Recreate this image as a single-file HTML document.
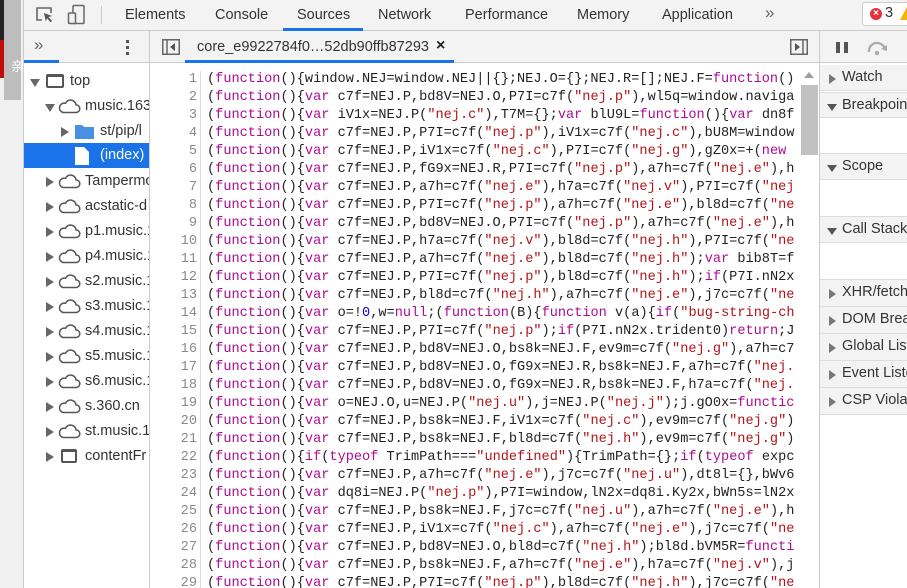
<!DOCTYPE html>
<html><head><meta charset="utf-8"><style>
*{box-sizing:border-box;margin:0;padding:0}
html,body{width:907px;height:588px;overflow:hidden}
body{background:#fff;font-family:"Liberation Sans",sans-serif;position:relative;color:#333}
.abs{position:absolute}
#strip{left:0;top:0;width:24px;height:588px;background:#f0f0f0;border-right:1px solid #ccc}
#top{left:24px;top:0;width:883px;height:31px;background:#f3f3f3;border-bottom:1px solid #ccc}
.tab{position:absolute;top:7px;font-size:14.5px;color:#333}
#side{left:24px;top:31px;width:126px;height:557px;background:#fff;border-right:1px solid #ccc;overflow:hidden}
.row2{background:#f3f3f3;border-bottom:1px solid #ccc;height:32px}
.tr{position:absolute;left:0;width:125px;height:25px;font-size:14.5px;color:#333;white-space:nowrap;overflow:hidden}
.tr span{position:absolute;top:4px}
.arr{position:absolute;top:8px;width:0;height:0;border-left:8px solid #666;border-top:5px solid transparent;border-bottom:5px solid transparent}
.arrd{position:absolute;top:10px;width:0;height:0;border-top:8px solid #666;border-left:5px solid transparent;border-right:5px solid transparent}
#ed{left:150px;top:31px;width:669px;height:557px;background:#fff;overflow:hidden}
#code{position:absolute;left:0;top:40px;width:650px;height:517px;overflow:hidden;font-family:"Liberation Mono",monospace;font-size:13.6px;line-height:18px;white-space:pre}
#nums{position:absolute;left:0;top:0;width:47px;text-align:right;color:#8a8a8a}
#gut{position:absolute;left:50px;top:0;width:1px;height:560px;background:#ddd}
#src{position:absolute;left:57px;top:0;color:#222}
.k{color:#aa0d91}.s{color:#b0151a}.n{color:#1c00cf}
#rp{left:819px;top:31px;width:88px;height:557px;background:#fff;border-left:1px solid #ccc;overflow:hidden}
.sec{position:absolute;left:0;width:88px;background:#f3f3f3;border-bottom:1px solid #ddd;border-top:1px solid #ddd;font-size:14.5px;color:#333;white-space:nowrap;overflow:hidden}
.sec span{position:absolute;left:22px;top:4px}
.sa{position:absolute;left:9px;top:9px;width:0;height:0;border-left:7px solid #777;border-top:5px solid transparent;border-bottom:5px solid transparent}
.sd{position:absolute;left:7px;top:11px;width:0;height:0;border-top:7px solid #555;border-left:5px solid transparent;border-right:5px solid transparent}
</style></head><body>
<div id="strip" class="abs">
 <div class="abs" style="left:0;top:0;width:4px;height:40px;background:#222"></div>
 <div class="abs" style="left:0;top:40px;width:4px;height:38px;background:#c20c0c"></div>
 <div class="abs" style="left:4px;top:0;width:17px;height:100px;background:#bdbdbd"></div>
 <div class="abs" style="left:11px;top:56px;color:#fff;font-size:13px;font-family:'Noto Sans CJK SC',sans-serif">亲</div>
</div>
<div id="top" class="abs">
 <svg class="abs" style="left:10px;top:5px" width="22" height="20" viewBox="0 0 22 20"><path d="M8 15H3V3h14v5" fill="none" stroke="#666" stroke-width="1.6"/><path d="M10 8l8 3-3.5 1 3.5 4-1.5 1.3-3.5-4-1.2 3.2z" fill="#555"/></svg>
 <svg class="abs" style="left:43px;top:4px" width="20" height="22" viewBox="0 0 20 22"><rect x="6" y="1.5" width="11" height="18" rx="1" fill="none" stroke="#666" stroke-width="1.5"/><rect x="1.5" y="9" width="7" height="10.5" rx="1" fill="#f3f3f3" stroke="#666" stroke-width="1.5"/></svg>
 <div class="abs" style="left:77px;top:6px;width:1px;height:18px;background:#ccc"></div>
 <div class="tab" style="left:101px">Elements</div>
 <div class="tab" style="left:191px">Console</div>
 <div class="tab" style="left:273px">Sources</div>
 <div class="abs" style="left:259px;top:28px;width:80px;height:3px;background:#1a73e8"></div>
 <div class="tab" style="left:354px">Network</div>
 <div class="tab" style="left:441px">Performance</div>
 <div class="tab" style="left:553px">Memory</div>
 <div class="tab" style="left:638px">Application</div>
 <div class="tab" style="left:741px;top:3px;font-size:17px;color:#666">»</div>
 <div class="abs" style="left:838px;top:2px;width:60px;height:24px;border:1px solid #ccc;border-radius:3px;background:#fff"></div>
 <div class="abs" style="left:846px;top:8px;width:12px;height:12px;border-radius:6px;background:#e8303a;color:#fff;font-size:10px;line-height:12px;text-align:center;font-weight:bold">×</div>
 <div class="abs" style="left:861px;top:5px;font-size:14.5px;color:#333">3</div>
 <div class="abs" style="left:876px;top:7px;width:0;height:0;border-bottom:13px solid #f4b400;border-left:7px solid transparent;border-right:7px solid transparent"></div>
</div>
<div id="side" class="abs">
 <div class="row2 abs" style="left:0;top:0;width:125px">
  <div class="abs" style="left:10px;top:4px;font-size:17px;color:#666">»</div>
  <div class="abs" style="left:102px;top:9px;width:3px;height:3px;background:#555;box-shadow:0 6px 0 #555,0 12px 0 #555"></div>
  <div class="abs" style="left:0;top:29px;width:35px;height:3px;background:#1a73e8"></div>
 </div>
 <div class="tr" style="top:38px"><div class="arrd" style="left:6px"></div><div class="abs" style="left:22px;top:5px;width:18px;height:14px;border:2px solid #555;border-top-width:3px;border-radius:2px"></div><span style="left:46px">top</span></div>
 <div class="tr" style="top:63px"><div class="arrd" style="left:21px"></div><svg class="abs" style="left:33px;top:5px" width="24" height="15" viewBox="0 0 24 15"><path d="M6 13.5h13a3.8 3.8 0 0 0 0-7.6 5.5 5.5 0 0 0-10.5-1.6A4.6 4.6 0 0 0 6 13.5z" fill="none" stroke="#555" stroke-width="1.5"/></svg><span style="left:61px">music.163</span></div>
 <div class="tr" style="top:88px"><div class="arr" style="left:37px"></div><svg class="abs" style="left:51px;top:4px" width="19" height="16" viewBox="0 0 19 16"><path d="M0 2h7l2 2h10v12H0z" fill="#4a90e2"/></svg><span style="left:76px">st/pip/l</span></div>
 <div class="tr" style="top:112px;background:#1a73e8;color:#fff"><svg class="abs" style="left:51px;top:4px" width="14" height="18" viewBox="0 0 14 18"><path d="M0 0h9l5 5v13H0z" fill="#fff"/></svg><span style="left:76px">(index)</span></div>
 <div class="tr" style="top:138px"><div class="arr" style="left:22px"></div><svg class="abs" style="left:33px;top:5px" width="24" height="15" viewBox="0 0 24 15"><path d="M6 13.5h13a3.8 3.8 0 0 0 0-7.6 5.5 5.5 0 0 0-10.5-1.6A4.6 4.6 0 0 0 6 13.5z" fill="none" stroke="#555" stroke-width="1.5"/></svg><span style="left:61px">Tampermo</span></div>
 <div class="tr" style="top:163px"><div class="arr" style="left:22px"></div><svg class="abs" style="left:33px;top:5px" width="24" height="15" viewBox="0 0 24 15"><path d="M6 13.5h13a3.8 3.8 0 0 0 0-7.6 5.5 5.5 0 0 0-10.5-1.6A4.6 4.6 0 0 0 6 13.5z" fill="none" stroke="#555" stroke-width="1.5"/></svg><span style="left:61px">acstatic-d</span></div>
 <div class="tr" style="top:188px"><div class="arr" style="left:22px"></div><svg class="abs" style="left:33px;top:5px" width="24" height="15" viewBox="0 0 24 15"><path d="M6 13.5h13a3.8 3.8 0 0 0 0-7.6 5.5 5.5 0 0 0-10.5-1.6A4.6 4.6 0 0 0 6 13.5z" fill="none" stroke="#555" stroke-width="1.5"/></svg><span style="left:61px">p1.music.1</span></div>
 <div class="tr" style="top:213px"><div class="arr" style="left:22px"></div><svg class="abs" style="left:33px;top:5px" width="24" height="15" viewBox="0 0 24 15"><path d="M6 13.5h13a3.8 3.8 0 0 0 0-7.6 5.5 5.5 0 0 0-10.5-1.6A4.6 4.6 0 0 0 6 13.5z" fill="none" stroke="#555" stroke-width="1.5"/></svg><span style="left:61px">p4.music.1</span></div>
 <div class="tr" style="top:238px"><div class="arr" style="left:22px"></div><svg class="abs" style="left:33px;top:5px" width="24" height="15" viewBox="0 0 24 15"><path d="M6 13.5h13a3.8 3.8 0 0 0 0-7.6 5.5 5.5 0 0 0-10.5-1.6A4.6 4.6 0 0 0 6 13.5z" fill="none" stroke="#555" stroke-width="1.5"/></svg><span style="left:61px">s2.music.1</span></div>
 <div class="tr" style="top:263px"><div class="arr" style="left:22px"></div><svg class="abs" style="left:33px;top:5px" width="24" height="15" viewBox="0 0 24 15"><path d="M6 13.5h13a3.8 3.8 0 0 0 0-7.6 5.5 5.5 0 0 0-10.5-1.6A4.6 4.6 0 0 0 6 13.5z" fill="none" stroke="#555" stroke-width="1.5"/></svg><span style="left:61px">s3.music.1</span></div>
 <div class="tr" style="top:288px"><div class="arr" style="left:22px"></div><svg class="abs" style="left:33px;top:5px" width="24" height="15" viewBox="0 0 24 15"><path d="M6 13.5h13a3.8 3.8 0 0 0 0-7.6 5.5 5.5 0 0 0-10.5-1.6A4.6 4.6 0 0 0 6 13.5z" fill="none" stroke="#555" stroke-width="1.5"/></svg><span style="left:61px">s4.music.1</span></div>
 <div class="tr" style="top:313px"><div class="arr" style="left:22px"></div><svg class="abs" style="left:33px;top:5px" width="24" height="15" viewBox="0 0 24 15"><path d="M6 13.5h13a3.8 3.8 0 0 0 0-7.6 5.5 5.5 0 0 0-10.5-1.6A4.6 4.6 0 0 0 6 13.5z" fill="none" stroke="#555" stroke-width="1.5"/></svg><span style="left:61px">s5.music.1</span></div>
 <div class="tr" style="top:338px"><div class="arr" style="left:22px"></div><svg class="abs" style="left:33px;top:5px" width="24" height="15" viewBox="0 0 24 15"><path d="M6 13.5h13a3.8 3.8 0 0 0 0-7.6 5.5 5.5 0 0 0-10.5-1.6A4.6 4.6 0 0 0 6 13.5z" fill="none" stroke="#555" stroke-width="1.5"/></svg><span style="left:61px">s6.music.1</span></div>
 <div class="tr" style="top:363px"><div class="arr" style="left:22px"></div><svg class="abs" style="left:33px;top:5px" width="24" height="15" viewBox="0 0 24 15"><path d="M6 13.5h13a3.8 3.8 0 0 0 0-7.6 5.5 5.5 0 0 0-10.5-1.6A4.6 4.6 0 0 0 6 13.5z" fill="none" stroke="#555" stroke-width="1.5"/></svg><span style="left:61px">s.360.cn</span></div>
 <div class="tr" style="top:388px"><div class="arr" style="left:22px"></div><svg class="abs" style="left:33px;top:5px" width="24" height="15" viewBox="0 0 24 15"><path d="M6 13.5h13a3.8 3.8 0 0 0 0-7.6 5.5 5.5 0 0 0-10.5-1.6A4.6 4.6 0 0 0 6 13.5z" fill="none" stroke="#555" stroke-width="1.5"/></svg><span style="left:61px">st.music.1</span></div>
 <div class="tr" style="top:413px"><div class="arr" style="left:22px"></div><div class="abs" style="left:37px;top:5px;width:16px;height:14px;border:2px solid #555;border-top-width:3px;border-radius:2px"></div><span style="left:61px">contentFr</span></div>
</div>
<div id="ed" class="abs">
 <div class="row2 abs" style="left:0;top:0;width:669px">
  <svg class="abs" style="left:12px;top:8px" width="18" height="16" viewBox="0 0 18 16"><rect x="0.75" y="0.75" width="16.5" height="14.5" fill="none" stroke="#666" stroke-width="1.5"/><path d="M5 1v14" stroke="#666" stroke-width="1.5"/><path d="M13 4v8l-5-4z" fill="#555"/></svg>
  <div class="abs" style="left:47px;top:8px;font-size:14.5px;color:#333">core_e9922784f0…52db90ffb87293</div>
  <div class="abs" style="left:286px;top:6px;font-size:16px;color:#222;font-weight:bold">×</div>
  <div class="abs" style="left:35px;top:29px;width:269px;height:3px;background:#1a73e8"></div>
  <svg class="abs" style="left:640px;top:8px" width="18" height="16" viewBox="0 0 18 16"><rect x="0.75" y="0.75" width="16.5" height="14.5" fill="none" stroke="#666" stroke-width="1.5"/><path d="M13 1v14" stroke="#666" stroke-width="1.5"/><path d="M5 4v8l5-4z" fill="#555"/></svg>
 </div>
 <div id="code">
<div id="nums">1
2
3
4
5
6
7
8
9
10
11
12
13
14
15
16
17
18
19
20
21
22
23
24
25
26
27
28
29</div><div id="gut"></div><div id="src">(<span class="k">function</span>(){window.NEJ=window.NEJ||{};NEJ.O={};NEJ.R=[];NEJ.F=<span class="k">function</span>()
(<span class="k">function</span>(){<span class="k">var</span> c7f=NEJ.P,bd8V=NEJ.O,P7I=c7f(<span class="s">"nej.p"</span>),wl5q=window.naviga
(<span class="k">function</span>(){<span class="k">var</span> iV1x=NEJ.P(<span class="s">"nej.c"</span>),T7M={};<span class="k">var</span> blU9L=<span class="k">function</span>(){<span class="k">var</span> dn8f
(<span class="k">function</span>(){<span class="k">var</span> c7f=NEJ.P,P7I=c7f(<span class="s">"nej.p"</span>),iV1x=c7f(<span class="s">"nej.c"</span>),bU8M=window
(<span class="k">function</span>(){<span class="k">var</span> c7f=NEJ.P,iV1x=c7f(<span class="s">"nej.c"</span>),P7I=c7f(<span class="s">"nej.g"</span>),gZ0x=+(<span class="k">new</span>
(<span class="k">function</span>(){<span class="k">var</span> c7f=NEJ.P,fG9x=NEJ.R,P7I=c7f(<span class="s">"nej.p"</span>),a7h=c7f(<span class="s">"nej.e"</span>),h
(<span class="k">function</span>(){<span class="k">var</span> c7f=NEJ.P,a7h=c7f(<span class="s">"nej.e"</span>),h7a=c7f(<span class="s">"nej.v"</span>),P7I=c7f(<span class="s">"nej</span>
(<span class="k">function</span>(){<span class="k">var</span> c7f=NEJ.P,P7I=c7f(<span class="s">"nej.p"</span>),a7h=c7f(<span class="s">"nej.e"</span>),bl8d=c7f(<span class="s">"ne</span>
(<span class="k">function</span>(){<span class="k">var</span> c7f=NEJ.P,bd8V=NEJ.O,P7I=c7f(<span class="s">"nej.p"</span>),a7h=c7f(<span class="s">"nej.e"</span>),h
(<span class="k">function</span>(){<span class="k">var</span> c7f=NEJ.P,h7a=c7f(<span class="s">"nej.v"</span>),bl8d=c7f(<span class="s">"nej.h"</span>),P7I=c7f(<span class="s">"ne</span>
(<span class="k">function</span>(){<span class="k">var</span> c7f=NEJ.P,a7h=c7f(<span class="s">"nej.e"</span>),bl8d=c7f(<span class="s">"nej.h"</span>);<span class="k">var</span> bib8T=f
(<span class="k">function</span>(){<span class="k">var</span> c7f=NEJ.P,P7I=c7f(<span class="s">"nej.p"</span>),bl8d=c7f(<span class="s">"nej.h"</span>);<span class="k">if</span>(P7I.nN2x
(<span class="k">function</span>(){<span class="k">var</span> c7f=NEJ.P,bl8d=c7f(<span class="s">"nej.h"</span>),a7h=c7f(<span class="s">"nej.e"</span>),j7c=c7f(<span class="s">"ne</span>
(<span class="k">function</span>(){<span class="k">var</span> o=!<span class="n">0</span>,w=<span class="k">null</span>;(<span class="k">function</span>(B){<span class="k">function</span> v(a){<span class="k">if</span>(<span class="s">"bug-string-ch</span>
(<span class="k">function</span>(){<span class="k">var</span> c7f=NEJ.P,P7I=c7f(<span class="s">"nej.p"</span>);<span class="k">if</span>(P7I.nN2x.trident0)<span class="k">return</span>;J
(<span class="k">function</span>(){<span class="k">var</span> c7f=NEJ.P,bd8V=NEJ.O,bs8k=NEJ.F,ev9m=c7f(<span class="s">"nej.g"</span>),a7h=c7
(<span class="k">function</span>(){<span class="k">var</span> c7f=NEJ.P,bd8V=NEJ.O,fG9x=NEJ.R,bs8k=NEJ.F,a7h=c7f(<span class="s">"nej.</span>
(<span class="k">function</span>(){<span class="k">var</span> c7f=NEJ.P,bd8V=NEJ.O,fG9x=NEJ.R,bs8k=NEJ.F,h7a=c7f(<span class="s">"nej.</span>
(<span class="k">function</span>(){<span class="k">var</span> o=NEJ.O,u=NEJ.P(<span class="s">"nej.u"</span>),j=NEJ.P(<span class="s">"nej.j"</span>);j.gO0x=<span class="k">functic</span>
(<span class="k">function</span>(){<span class="k">var</span> c7f=NEJ.P,bs8k=NEJ.F,iV1x=c7f(<span class="s">"nej.c"</span>),ev9m=c7f(<span class="s">"nej.g"</span>)
(<span class="k">function</span>(){<span class="k">var</span> c7f=NEJ.P,bs8k=NEJ.F,bl8d=c7f(<span class="s">"nej.h"</span>),ev9m=c7f(<span class="s">"nej.g"</span>)
(<span class="k">function</span>(){<span class="k">if</span>(<span class="k">typeof</span> TrimPath===<span class="s">"undefined"</span>){TrimPath={};<span class="k">if</span>(<span class="k">typeof</span> expc
(<span class="k">function</span>(){<span class="k">var</span> c7f=NEJ.P,a7h=c7f(<span class="s">"nej.e"</span>),j7c=c7f(<span class="s">"nej.u"</span>),dt8l={},bWv6
(<span class="k">function</span>(){<span class="k">var</span> dq8i=NEJ.P(<span class="s">"nej.p"</span>),P7I=window,lN2x=dq8i.Ky2x,bWn5s=lN2x
(<span class="k">function</span>(){<span class="k">var</span> c7f=NEJ.P,bs8k=NEJ.F,j7c=c7f(<span class="s">"nej.u"</span>),a7h=c7f(<span class="s">"nej.e"</span>),h
(<span class="k">function</span>(){<span class="k">var</span> c7f=NEJ.P,iV1x=c7f(<span class="s">"nej.c"</span>),a7h=c7f(<span class="s">"nej.e"</span>),j7c=c7f(<span class="s">"ne</span>
(<span class="k">function</span>(){<span class="k">var</span> c7f=NEJ.P,bd8V=NEJ.O,bl8d=c7f(<span class="s">"nej.h"</span>);bl8d.bVM5R=<span class="k">functi</span>
(<span class="k">function</span>(){<span class="k">var</span> c7f=NEJ.P,bs8k=NEJ.F,a7h=c7f(<span class="s">"nej.e"</span>),h7a=c7f(<span class="s">"nej.v"</span>),j
(<span class="k">function</span>(){<span class="k">var</span> c7f=NEJ.P,P7I=c7f(<span class="s">"nej.p"</span>),bl8d=c7f(<span class="s">"nej.h"</span>),j7c=c7f(<span class="s">"ne</span></div>
 </div>
 <div class="abs" style="left:650px;top:38px;width:19px;height:519px;background:#fff"></div>
 <div class="abs" style="left:654px;top:41px;width:0;height:0;border-bottom:6px solid #a0a0a0;border-left:5px solid transparent;border-right:5px solid transparent"></div>
 <div class="abs" style="left:651px;top:54px;width:17px;height:70px;background:#c1c1c1"></div>
</div>
<div id="rp" class="abs">
 <div class="row2 abs" style="left:0;top:0;width:88px;border-bottom:1px solid #ccc">
  <div class="abs" style="left:16px;top:11px;width:4px;height:11px;background:#555"></div>
  <div class="abs" style="left:24px;top:11px;width:4px;height:11px;background:#555"></div>
  <svg class="abs" style="left:46px;top:9px" width="24" height="16" viewBox="0 0 24 16"><path d="M3 12a8 8 0 0 1 16-2" fill="none" stroke="#aaa" stroke-width="2.2"/><path d="M15 9l6 2 0-6z" fill="#aaa"/><circle cx="11" cy="13" r="2" fill="#aaa"/></svg>
 </div>
 <div class="sec" style="top:34px;height:26px;border-top:none"><div class="sa"></div><span>Watch</span></div>
 <div class="sec" style="top:61px;height:26px"><div class="sd"></div><span>Breakpoints</span></div>
 <div class="sec" style="top:122px;height:27px"><div class="sd"></div><span>Scope</span></div>
 <div class="sec" style="top:185px;height:27px"><div class="sd"></div><span>Call Stack</span></div>
 <div class="sec" style="top:248px;height:28px"><div class="sa"></div><span>XHR/fetch</span></div>
 <div class="sec" style="top:275px;height:28px"><div class="sa"></div><span>DOM Brea</span></div>
 <div class="sec" style="top:302px;height:28px"><div class="sa"></div><span>Global List</span></div>
 <div class="sec" style="top:329px;height:28px"><div class="sa"></div><span>Event Liste</span></div>
 <div class="sec" style="top:356px;height:28px"><div class="sa"></div><span>CSP Violat</span></div>
</div>
</body></html>
